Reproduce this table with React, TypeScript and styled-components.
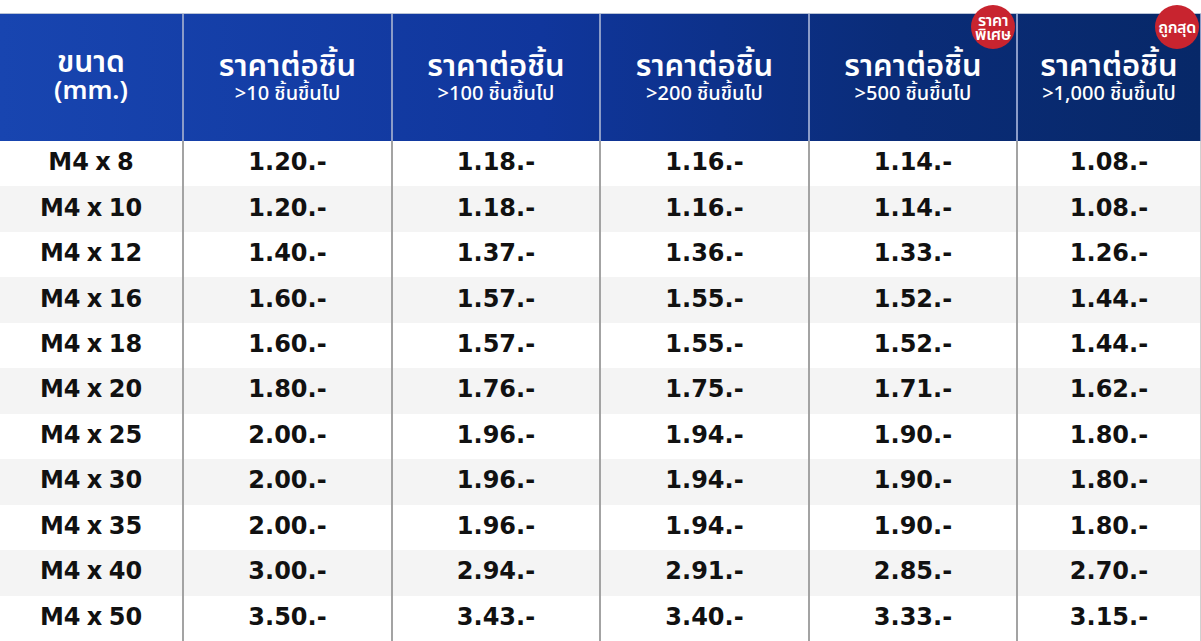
import styled, { createGlobalStyle } from "styled-components";

const GlobalStyle = createGlobalStyle`
  html, body {
    margin: 0;
    padding: 0;
    background: #ffffff;
  }
  body {
    font-family: "Noto Sans", "Noto Sans Thai", "Loma", "Garuda", sans-serif;
  }
`;

const COLS = "184px 209px 208px 209px 208px 1fr";

const Page = styled.div`
  width: 1201px;
  height: 641px;
  padding-top: 13px;
  box-sizing: border-box;
  display: flex;
  flex-direction: column;
  overflow: hidden;
`;

const Header = styled.div`
  display: grid;
  grid-template-columns: ${COLS};
  height: 128px;
  flex: none;
  background: linear-gradient(90deg, #1845b0 0%, #10369c 45%, #0a2c78 75%, #072868 100%);
  border-top: 1px solid #b9c3d6;
  box-sizing: border-box;
`;

const HeadCell = styled.div<{ $last?: boolean }>`
  position: relative;
  display: flex;
  flex-direction: column;
  align-items: center;
  justify-content: center;
  color: #ffffff;
  border-right: ${({ $last }) => ($last ? "1px solid #8b9cc8" : "2px solid #8b9cc8")};
  padding-bottom: 6px;
`;

const HeadMain = styled.div`
  font-size: 31px;
  font-weight: 600;
  line-height: 36px;
`;

const HeadSize = styled.div<{ $big?: boolean }>`
  font-size: ${({ $big }) => ($big ? 30 : 26)}px;
  font-weight: 600;
  line-height: 28px;
  text-align: center;
`;

const HeadSub = styled.div`
  font-size: 20px;
  font-weight: 500;
  line-height: 22px;
`;

const Badge = styled.div`
  position: absolute;
  top: -9px;
  right: 1px;
  width: 44px;
  height: 44px;
  border-radius: 50%;
  background: #c8242f;
  color: #ffffff;
  display: flex;
  flex-direction: column;
  align-items: center;
  justify-content: center;
  font-size: 16px;
  font-weight: 600;
  line-height: 14px;
  letter-spacing: -0.4px;
  white-space: nowrap;
`;

const Body = styled.div`
  flex: 1;
  display: flex;
  flex-direction: column;
`;

const Row = styled.div<{ $alt: boolean }>`
  flex: 1;
  display: grid;
  grid-template-columns: ${COLS};
  background: ${({ $alt }) => ($alt ? "#f4f4f4" : "#ffffff")};
`;

const Cell = styled.div<{ $last?: boolean }>`
  display: flex;
  align-items: center;
  justify-content: center;
  font-family: "DejaVu Sans", "Noto Sans", sans-serif;
  font-size: 24px;
  font-weight: 700;
  color: #111111;
  padding-bottom: 3px;
  word-spacing: -2px;
  border-right: ${({ $last }) => ($last ? "1px solid #d0d0d0" : "2px solid #a3a3a3")};
`;

const heads = [
  { sub: ">10 ชิ้นขึ้นไป" },
  { sub: ">100 ชิ้นขึ้นไป" },
  { sub: ">200 ชิ้นขึ้นไป" },
  { sub: ">500 ชิ้นขึ้นไป", badge: ["ราคา", "พิเศษ"] },
  { sub: ">1,000 ชิ้นขึ้นไป", badge: ["ถูกสุด"] },
];

const rows: [string, string, string, string, string, string][] = [
  ["M4 x 8", "1.20.-", "1.18.-", "1.16.-", "1.14.-", "1.08.-"],
  ["M4 x 10", "1.20.-", "1.18.-", "1.16.-", "1.14.-", "1.08.-"],
  ["M4 x 12", "1.40.-", "1.37.-", "1.36.-", "1.33.-", "1.26.-"],
  ["M4 x 16", "1.60.-", "1.57.-", "1.55.-", "1.52.-", "1.44.-"],
  ["M4 x 18", "1.60.-", "1.57.-", "1.55.-", "1.52.-", "1.44.-"],
  ["M4 x 20", "1.80.-", "1.76.-", "1.75.-", "1.71.-", "1.62.-"],
  ["M4 x 25", "2.00.-", "1.96.-", "1.94.-", "1.90.-", "1.80.-"],
  ["M4 x 30", "2.00.-", "1.96.-", "1.94.-", "1.90.-", "1.80.-"],
  ["M4 x 35", "2.00.-", "1.96.-", "1.94.-", "1.90.-", "1.80.-"],
  ["M4 x 40", "3.00.-", "2.94.-", "2.91.-", "2.85.-", "2.70.-"],
  ["M4 x 50", "3.50.-", "3.43.-", "3.40.-", "3.33.-", "3.15.-"],
];

export default function App() {
  return (
    <>
      <GlobalStyle />
      <Page>
        <Header>
          <HeadCell>
            <HeadSize $big>ขนาด</HeadSize>
            <HeadSize>(mm.)</HeadSize>
          </HeadCell>
          {heads.map((h, i) => (
            <HeadCell key={h.sub} $last={i === heads.length - 1}>
              <HeadMain>ราคาต่อชิ้น</HeadMain>
              <HeadSub>{h.sub}</HeadSub>
              {h.badge && (
                <Badge>
                  {h.badge.map((t) => (
                    <span key={t}>{t}</span>
                  ))}
                </Badge>
              )}
            </HeadCell>
          ))}
        </Header>
        <Body>
          {rows.map((r, i) => (
            <Row key={r[0]} $alt={i % 2 === 1}>
              {r.map((v, j) => (
                <Cell key={j} $last={j === r.length - 1}>
                  {v}
                </Cell>
              ))}
            </Row>
          ))}
        </Body>
      </Page>
    </>
  );
}
